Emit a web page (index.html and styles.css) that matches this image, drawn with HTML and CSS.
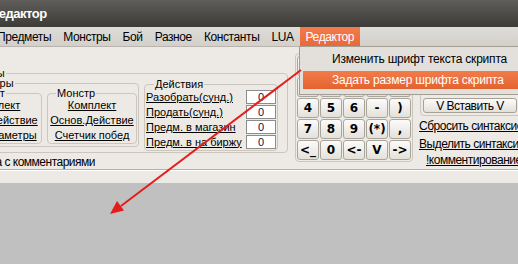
FILE: index.html
```html
<!DOCTYPE html>
<html lang="ru">
<head>
    <meta charset="UTF-8">
    <title>Редактор</title>
    <link rel="stylesheet" href="styles.css">
</head>
<body>
    <div class="window">
        <div class="titlebar"><span class="title">Редактор</span></div>

        <div class="menubar">
            <span class="menu-item first">Предметы</span>
            <span class="menu-item">Монстры</span>
            <span class="menu-item">Бой</span>
            <span class="menu-item">Разное</span>
            <span class="menu-item">Константы</span>
            <span class="menu-item">LUA</span>
            <span class="menu-item active">Редактор</span>
        </div>

        <div class="client">
            <div class="form-row">
                <div class="left-col">
                    <fieldset class="grp grp-outer">
                        <legend>Команды</legend>
                        <div class="grp-row">
                            <fieldset class="grp grp-params">
                                <legend>Параметры</legend>
                                <div class="grp-row">
                                    <fieldset class="grp grp-links grp-item">
                                        <legend>Предмет</legend>
                                        <a>Комплект</a>
                                        <a>Основ.Действие</a>
                                        <a>Доп.Параметры</a>
                                    </fieldset>
                                    <fieldset class="grp grp-links grp-monster">
                                        <legend>Монстр</legend>
                                        <a>Комплект</a>
                                        <a>Основ.Действие</a>
                                        <a>Счетчик побед</a>
                                    </fieldset>
                                </div>
                            </fieldset>
                            <fieldset class="grp grp-actions">
                                <legend>Действия</legend>
                                <div class="action-row"><a>Разобрать(сунд.)</a><input class="num" value="0"></div>
                                <div class="action-row"><a>Продать(сунд.)</a><input class="num" value="0"></div>
                                <div class="action-row"><a>Предм. в магазин</a><input class="num" value="0"></div>
                                <div class="action-row"><a>Предм. в на биржу</a><input class="num" value="0"></div>
                            </fieldset>
                        </div>
                    </fieldset>
                    <div class="check-label">Показывать текст скрипта с комментариями</div>
                </div>

                <div class="keypad">
                    <button class="key">=</button>
                    <button class="key">1</button>
                    <button class="key">2</button>
                    <button class="key">3</button>
                    <button class="key">(</button>
                    <button class="key">+</button>
                    <button class="key">*</button>
                    <button class="key">/</button>
                    <button class="key">"</button>
                    <button class="key">.</button>
                    <button class="key">4</button>
                    <button class="key">5</button>
                    <button class="key">6</button>
                    <button class="key">-</button>
                    <button class="key">)</button>
                    <button class="key">7</button>
                    <button class="key">8</button>
                    <button class="key">9</button>
                    <button class="key">(*)</button>
                    <button class="key">,</button>
                    <button class="key">&lt;_</button>
                    <button class="key">0</button>
                    <button class="key">&lt;-</button>
                    <button class="key">V</button>
                    <button class="key">-&gt;</button>
                </div>

                <div class="right-col">
                    <fieldset class="grp grp-insert">
                        <button class="btn">^ Копировать ^</button>
                        <button class="btn">V Вставить V</button>
                    </fieldset>
                    <a class="side-link">Сбросить синтаксис</a>
                    <a class="side-link">Выделить синтаксис</a>
                    <a class="side-link indent">!комментирование</a>
                </div>
            </div>
            <div class="sep"></div>
        </div>

        <div class="workspace"></div>

        <!-- open "Редактор" menu -->
        <div class="popup">
            <div class="popup-item">Изменить шрифт текста скрипта</div>
            <div class="popup-item selected">Задать размер шрифта скрипта</div>
        </div>

        <!-- annotation arrow -->
        <svg class="arrow" viewBox="0 0 518 264" width="518" height="264">
            <line x1="301" y1="70" x2="121" y2="206" stroke="#e41c1c" stroke-width="2" />
            <polygon points="110,214 124,210.5 117,201" fill="#e41c1c" />
        </svg>
    </div>
</body>
</html>
```

FILE: styles.css
```css
body {
    margin: 0;
    background: #c0c0c0;
    font-family: "Liberation Sans", Arial, sans-serif;
    font-size: 12px;
    letter-spacing: -0.5px;
    color: #000;
}

.window {
    position: relative;
    width: 518px;
    height: 264px;
    overflow: hidden;
    display: flex;
    flex-direction: column;
}

/* title bar */
.titlebar {
    height: 27px;
    flex: none;
    background: linear-gradient(#5f5e5a, #3c3b37);
    display: flex;
    align-items: center;
}

.title {
    margin-left: -9px;
    color: #fff;
    font-weight: bold;
    font-size: 13px;
    letter-spacing: -0.5px;
}

/* menu bar */
.menubar {
    height: 19px;
    flex: none;
    display: flex;
    align-items: stretch;
    background: linear-gradient(#dedcd7, #d3d0ca);
    border-bottom: 1px solid #b9b5ae;
}

.menu-item {
    padding: 0 6px;
    line-height: 20px;
    letter-spacing: -0.4px;
    white-space: nowrap;
}

.menu-item.first {
    margin-left: -9px;
}

.menu-item.active {
    background: linear-gradient(#f27b4b, #e8693a);
    color: #fff;
}

/* client area */
.client {
    height: 136px;
    flex: none;
    background: #edeae5;
}

.form-row {
    display: flex;
    align-items: flex-start;
    margin-left: -60px;
    height: 122px;
}

.grp {
    margin: 0;
    padding: 0;
    min-width: 0;
    box-sizing: border-box;
    border: 1px solid #cbc7bf;
    border-radius: 4px;
}

.grp > legend {
    margin-left: 8px;
    padding: 0 1px;
    font-size: 11px;
    letter-spacing: 0;
    line-height: 10px;
}

.grp-row {
    display: flex;
    align-items: flex-start;
    gap: 5px;
}

.left-col {
    margin-top: 21px;
    width: 348px;
    flex: none;
}

.grp-outer {
    width: 348px;
    padding: 0 9px 1px 6px;
}

.grp-outer > legend {
    margin-left: 10px;
}

.grp-params {
    width: 192px;
    padding: 0 1px 2px 2px;
}

.grp-params > legend {
    margin-left: 4px;
}

.grp-links {
    display: flex;
    flex-direction: column;
    align-items: center;
    padding: 0;
    font-size: 11px;
    letter-spacing: 0;
}

.grp-links a {
    line-height: 15px;
    text-decoration: underline;
    white-space: nowrap;
}

.grp-item {
    width: 92px;
}

.grp-monster {
    width: 90px;
}

.grp-actions {
    width: 134px;
    margin-top: 1px;
    padding: 0 1px 1px 1px;
    font-size: 11px;
    letter-spacing: 0;
}

.action-row {
    height: 15px;
    display: flex;
    align-items: center;
    justify-content: space-between;
}

.action-row a {
    text-decoration: underline;
    white-space: nowrap;
}

.num {
    width: 30px;
    height: 14px;
    box-sizing: border-box;
    margin: 0;
    padding: 0;
    border: 1px solid #8c8c8c;
    background: #fff;
    font-family: inherit;
    font-size: 11px;
    color: #101048;
    text-align: center;
}

.check-label {
    width: 155px;
    margin-top: 2px;
    line-height: 14px;
    text-align: right;
    white-space: nowrap;
    overflow: hidden;
    direction: rtl;
}

/* keypad */
.keypad {
    flex: none;
    margin: 6px 0 0 7px;
    padding: 2px 1px 1px 1px;
    border: 1px solid #cbc7bf;
    border-radius: 4px;
    display: grid;
    grid-template-columns: repeat(5, 22px);
    grid-auto-rows: 20px;
    gap: 1px;
}

.key {
    margin: 0;
    padding: 0;
    border: 1px solid #a9a59c;
    border-radius: 3px;
    background: linear-gradient(#fbfbfa, #e4e1da);
    font-family: "DejaVu Sans", sans-serif;
    font-weight: bold;
    font-size: 12px;
    letter-spacing: 0;
    color: #000;
}

/* right column */
.right-col {
    flex: none;
    width: 120px;
    margin: 5px 0 0 6px;
    display: flex;
    flex-direction: column;
    align-items: flex-start;
}

.grp-insert {
    width: 110px;
    margin-left: 1px;
    padding: 27px 0 2px 2px;
    display: flex;
    flex-direction: column;
    gap: 3px;
}

.btn {
    width: 94px;
    height: 15px;
    margin: 0;
    padding: 0;
    border: 1px solid #a5a196;
    border-radius: 3px;
    background: linear-gradient(#fbfbf9, #e3e0d9);
    font-family: inherit;
    font-size: 12px;
    letter-spacing: -0.5px;
    color: #000;
}

.side-link {
    line-height: 18px;
    text-decoration: underline;
    white-space: nowrap;
}

.side-link:first-of-type {
    margin-top: 1px;
}

.side-link.indent {
    margin-left: 7px;
    line-height: 14px;
}

.sep {
    border-top: 1px solid #b4b0a8;
    border-bottom: 1px solid #fff;
}

.workspace {
    flex: 1;
    background: #c0c0c0;
}

/* popup menu */
.popup {
    position: absolute;
    left: 299px;
    top: 46px;
    width: 230px;
    height: 49px;
    box-sizing: border-box;
    padding: 3px 0 0 3px;
    background: #e3e0db;
    border: 1px solid #a29d95;
}

.popup-item {
    height: 18px;
    line-height: 18px;
    padding-left: 29px;
    margin-bottom: 3px;
    letter-spacing: -0.2px;
    white-space: nowrap;
}

.popup-item.selected {
    background: linear-gradient(#f27b4b, #e3632f);
    color: #fff;
}

.arrow {
    position: absolute;
    left: 0;
    top: 0;
    pointer-events: none;
}
```
